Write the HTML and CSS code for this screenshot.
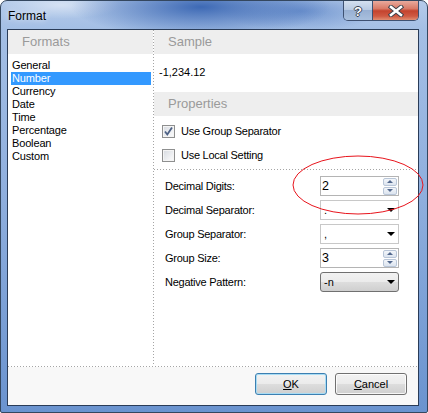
FILE: index.html
```html
<!DOCTYPE html>
<html lang="en">
  <head>
    <meta charset="UTF-8" />
    <meta name="viewport" content="width=device-width, initial-scale=1.0" />
    <title>Format</title>
    <link rel="stylesheet" href="styles.css">
  </head>
  <body>
    <div class="window">
      <div class="titlebar">
        <span class="caption">Format</span>
        <div class="capButtons">
          <div class="capBtn helpBtn"><span>?</span></div>
          <div class="capBtn closeBtn">
            <svg width="16" height="12" viewBox="0 0 16 12">
              <path d="M3 2 L13 10 M13 2 L3 10" stroke="#3a3f4a" stroke-width="4.4" stroke-linecap="square" fill="none"/>
              <path d="M3 2 L13 10 M13 2 L3 10" stroke="#ffffff" stroke-width="2.6" stroke-linecap="square" fill="none"/>
            </svg>
          </div>
        </div>
      </div>

      <div class="client">
        <div class="main">
          <div class="leftPanel">
            <div class="sectionHead">Formats</div>
            <ul class="formatList">
              <li>General</li>
              <li class="selected">Number</li>
              <li>Currency</li>
              <li>Date</li>
              <li>Time</li>
              <li>Percentage</li>
              <li>Boolean</li>
              <li>Custom</li>
            </ul>
          </div>
          <div class="vSep"></div>
          <div class="rightPanel">
            <div class="sectionHead">Sample</div>
            <div class="sampleValue">-1,234.12</div>
            <div class="sectionHead">Properties</div>

            <div class="checks">
              <label class="checkRow">
                <span class="checkBox">
                  <svg width="11" height="11" viewBox="0 0 11 11">
                    <path d="M2 5.5 L4.3 8.5 L9 1.5" stroke="#4d6185" stroke-width="1.8" fill="none"/>
                  </svg>
                </span>
                Use Group Separator
              </label>
              <label class="checkRow">
                <span class="checkBox"></span>
                Use Local Setting
              </label>
            </div>

            <div class="hSep"></div>

            <div class="fields">
              <div class="fieldRow">
                <span class="fieldLabel">Decimal Digits:</span>
                <div class="box spinBox">
                  <span class="spinValue">2</span>
                  <div class="spinBtns">
                    <div class="spinBtn"><span class="arrowUp"></span></div>
                    <div class="spinBtn"><span class="arrowDown"></span></div>
                  </div>
                </div>
              </div>
              <div class="fieldRow">
                <span class="fieldLabel">Decimal Separator:</span>
                <div class="box combo">
                  <span class="comboValue">.</span>
                  <span class="dropArrow"></span>
                </div>
              </div>
              <div class="fieldRow">
                <span class="fieldLabel">Group Separator:</span>
                <div class="box combo">
                  <span class="comboValue">,</span>
                  <span class="dropArrow"></span>
                </div>
              </div>
              <div class="fieldRow">
                <span class="fieldLabel">Group Size:</span>
                <div class="box spinBox">
                  <span class="spinValue">3</span>
                  <div class="spinBtns">
                    <div class="spinBtn"><span class="arrowUp"></span></div>
                    <div class="spinBtn"><span class="arrowDown"></span></div>
                  </div>
                </div>
              </div>
              <div class="fieldRow">
                <span class="fieldLabel">Negative Pattern:</span>
                <div class="box dropList">
                  <span class="comboValue">-n</span>
                  <span class="dropArrow"></span>
                </div>
              </div>
            </div>
          </div>
        </div>

        <div class="hSep"></div>

        <div class="footer">
          <button class="btn btnDefault"><u>O</u>K</button>
          <button class="btn"><u>C</u>ancel</button>
        </div>
      </div>

      <!-- red marker ring round the digits field -->
      <svg class="marker" width="134" height="62" viewBox="0 0 134 62">
        <ellipse cx="66" cy="30" rx="65" ry="29" stroke="#e8141c" stroke-width="1" fill="none"/>
      </svg>
    </div>
  </body>
</html>
```

FILE: styles.css
```css
html, body {
  margin: 0;
  padding: 0;
  background: #ffffff;
}

body {
  font-family: "Liberation Sans", Arial, sans-serif;
  font-size: 11px;
  color: #000;
}

/* window frame */
.window {
  position: relative;
  width: 428px;
  height: 413px;
  box-sizing: border-box;
  border: 1px solid #34475f;
  border-radius: 7px 7px 2px 2px;
  display: flex;
  flex-direction: column;
  background:
    radial-gradient(ellipse 130px 30px at 200px 6px, rgba(55, 100, 178, 0.95), rgba(55, 100, 178, 0) 100%),
    radial-gradient(ellipse 80px 20px at 300px 10px, rgba(70, 115, 190, 0.6), rgba(70, 115, 190, 0) 100%),
    radial-gradient(ellipse 60px 14px at 60px 4px, rgba(255, 255, 255, 0.45), rgba(255, 255, 255, 0) 100%),
    linear-gradient(to bottom, #b5cbea 0px, #a4bfe5 28px, #8eaedd 200px, #6a93cf 412px);
}

.titlebar {
  height: 28px;
  display: flex;
  align-items: flex-start;
  justify-content: space-between;
  flex-shrink: 0;
}

.caption {
  font-size: 12px;
  margin: 8px 0 0 7px;
  color: #000;
  text-shadow: 0 0 6px rgba(255, 255, 255, 0.9);
}

.capButtons {
  display: flex;
  margin-right: 8px;
  border: 1px solid #3e5172;
  border-top: none;
  border-radius: 0 0 5px 5px;
  overflow: hidden;
  height: 19px;
}

.capBtn {
  display: flex;
  align-items: center;
  justify-content: center;
}

.helpBtn {
  width: 28px;
  border-right: 1px solid #3e5172;
  background: linear-gradient(to bottom, #d4e0f0 0%, #b9cbe3 45%, #98b0d3 50%, #a9c0de 100%);
}

.helpBtn span {
  font: bold 13px "Liberation Sans", Arial, sans-serif;
  color: #fff;
  text-shadow: 1px 0 #3a4354, -1px 0 #3a4354, 0 1px #3a4354, 0 -1px #3a4354;
  margin-top: 1px;
}

.closeBtn {
  width: 45px;
  background: linear-gradient(to bottom, #e9aa9d 0%, #d97a67 40%, #c4432e 52%, #cf5a43 80%, #e08e72 100%);
}

/* client area */
.client {
  margin: 0 8px 6px 6px;
  width: 412px;
  height: 377px;
  box-sizing: border-box;
  border: 1px solid #2a3c58;
  background: #ffffff;
  display: flex;
  flex-direction: column;
}

.main {
  display: flex;
  height: 336px;
}

.leftPanel {
  width: 145px;
}

.rightPanel {
  flex: 1;
}

.vSep {
  width: 1px;
  background: repeating-linear-gradient(to bottom, #a5a5a5 0 1px, transparent 1px 3px);
}

.hSep {
  height: 1px;
  background: repeating-linear-gradient(to right, #a5a5a5 0 1px, transparent 1px 3px);
}

.sectionHead {
  height: 24px;
  line-height: 24px;
  background: #eeeeee;
  color: #9a9a9a;
  font-size: 13px;
  padding-left: 14px;
}

.formatList {
  list-style: none;
  margin: 5px 2px 0 3px;
  padding: 0;
}

.formatList li {
  height: 13px;
  line-height: 13px;
  padding-left: 1px;
  letter-spacing: -0.15px;
}

.formatList li.selected {
  background: #3399ff;
  color: #fff;
}

.sampleValue {
  height: 38px;
  box-sizing: border-box;
  padding: 11px 0 0 5px;
  line-height: 14px;
}

/* check boxes */
.checks {
  padding-top: 3px;
}

.checkRow {
  display: flex;
  align-items: center;
  height: 24px;
  padding-left: 8px;
  letter-spacing: -0.25px;
}

.checkBox {
  width: 13px;
  height: 13px;
  box-sizing: border-box;
  border: 1px solid #8e8f8f;
  margin-right: 6px;
  background: linear-gradient(135deg, #d6dae0 0%, #f2f3f5 70%, #fbfbfb 100%);
  box-shadow: inset 0 0 0 1px #f4f4f4;
  display: flex;
  align-items: center;
  justify-content: center;
}

.checks + .hSep {
  margin-top: 2px;
}

/* labelled fields */
.fields {
  padding: 6px 0 0 11px;
  display: flex;
  flex-direction: column;
  gap: 4px;
}

.fieldRow {
  display: flex;
  align-items: center;
  height: 20px;
}

.fieldLabel {
  width: 155px;
  letter-spacing: -0.25px;
}

.box {
  width: 79px;
  height: 20px;
  box-sizing: border-box;
  border: 1px solid #b4b4b4;
  display: flex;
  align-items: center;
  position: relative;
  background: #fff;
}

.spinValue {
  font-size: 12.5px;
  padding-left: 1px;
  flex: 1;
}

.spinBtns {
  display: flex;
  flex-direction: column;
  gap: 1px;
  margin-right: 1px;
}

.spinBtn {
  width: 14px;
  height: 8px;
  box-sizing: border-box;
  border: 1px solid #b9c6d8;
  border-radius: 2px;
  background: linear-gradient(to bottom, #f3f6fa, #dce4ef);
  display: flex;
  align-items: center;
  justify-content: center;
}

.arrowUp {
  width: 0;
  height: 0;
  border-left: 3px solid transparent;
  border-right: 3px solid transparent;
  border-bottom: 3px solid #52688e;
}

.arrowDown {
  width: 0;
  height: 0;
  border-left: 3px solid transparent;
  border-right: 3px solid transparent;
  border-top: 3px solid #52688e;
}

.comboValue {
  flex: 1;
  padding-left: 3px;
}

.combo {
  border-color: #c8c8c8;
}

.dropArrow {
  width: 0;
  height: 0;
  border-left: 4px solid transparent;
  border-right: 4px solid transparent;
  border-top: 4px solid #000;
  margin-right: 3px;
}

.dropList {
  border-color: #707070;
  border-radius: 3px;
  background: linear-gradient(to bottom, #f2f2f2 0%, #ebebeb 50%, #dddddd 51%, #cfcfcf 100%);
}

/* dialog buttons */
.footer {
  flex: 1;
  background: #f8f8f8;
  display: flex;
  justify-content: flex-end;
  align-items: flex-start;
  gap: 8px;
  padding: 6px 11px 0 0;
}

.btn {
  width: 72px;
  height: 22px;
  box-sizing: border-box;
  border: 1px solid #707070;
  border-radius: 3px;
  background: linear-gradient(to bottom, #f2f2f2 0%, #ebebeb 50%, #dddddd 51%, #cfcfcf 100%);
  box-shadow: inset 0 0 0 1px rgba(255, 255, 255, 0.8);
  font-family: "Liberation Sans", Arial, sans-serif;
  font-size: 11px;
  color: #000;
  padding: 0;
}

.btnDefault {
  border-color: #3c7fb1;
  box-shadow: inset 0 0 0 1px #a8dcf4;
}

.marker {
  position: absolute;
  left: 291px;
  top: 154px;
}
```
